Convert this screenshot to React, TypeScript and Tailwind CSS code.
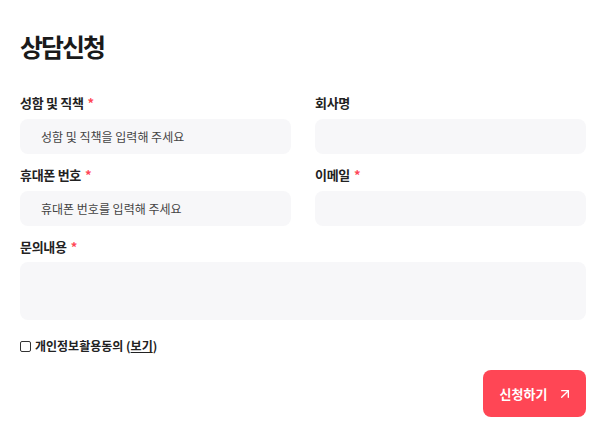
import { ArrowUpRight } from 'lucide-react'

const font = { fontFamily: '"Noto Sans CJK KR", "Noto Sans", sans-serif' }

function Label({ text, required }: { text: string; required?: boolean }) {
  return (
    <label className="flex items-center h-5 text-[13px] font-semibold text-[#222] tracking-[-0.3px]">
      {text}
      {required && <span className="ml-1 text-[#ff4757]">*</span>}
    </label>
  )
}

function Field({ label, required, placeholder }: { label: string; required?: boolean; placeholder?: string }) {
  return (
    <div className="flex flex-col gap-[6px]">
      <Label text={label} required={required} />
      <input
        type="text"
        placeholder={placeholder}
        className="h-[35px] w-full rounded-lg bg-[#f7f7f9] px-[21px] text-[12px] text-[#333] outline-none placeholder:text-[#444]"
      />
    </div>
  )
}

export default function App() {
  return (
    <div className="w-[600px] h-[431px] bg-white pl-5 pr-[14px] pt-[28px]" style={font}>
      <h1 className="text-[25px] font-bold leading-[36px] text-[#1a1a1a] tracking-[-2px]">상담신청</h1>

      <div className="mt-[29px] grid grid-cols-2 gap-x-6 gap-y-[11px]">
        <Field label="성함 및 직책" required placeholder="성함 및 직책을 입력해 주세요" />
        <Field label="회사명" />
        <Field label="휴대폰 번호" required placeholder="휴대폰 번호를 입력해 주세요" />
        <Field label="이메일" required />
        <div className="col-span-2 flex flex-col gap-[5px]">
          <Label text="문의내용" required />
          <textarea className="h-[58px] w-full resize-none rounded-lg bg-[#f7f7f9] px-[21px] py-2 text-[12px] outline-none" />
        </div>
      </div>

      <div className="mt-[17px] flex items-center gap-1 text-[12px] font-semibold text-[#222]">
        <input type="checkbox" className="h-[11px] w-[11px] appearance-none rounded-[2px] border border-[#333] bg-white" />
        <span>개인정보활용동의 (<span className="underline">보기</span>)</span>
      </div>

      <div className="mt-[15px] flex justify-end">
        <button className="flex h-[47px] w-[103px] items-center justify-center gap-[10px] rounded-lg bg-[#ff4655] pl-1 text-[13px] font-semibold text-white">
          신청하기
          <ArrowUpRight className="h-4 w-4" strokeWidth={2} />
        </button>
      </div>
    </div>
  )
}
